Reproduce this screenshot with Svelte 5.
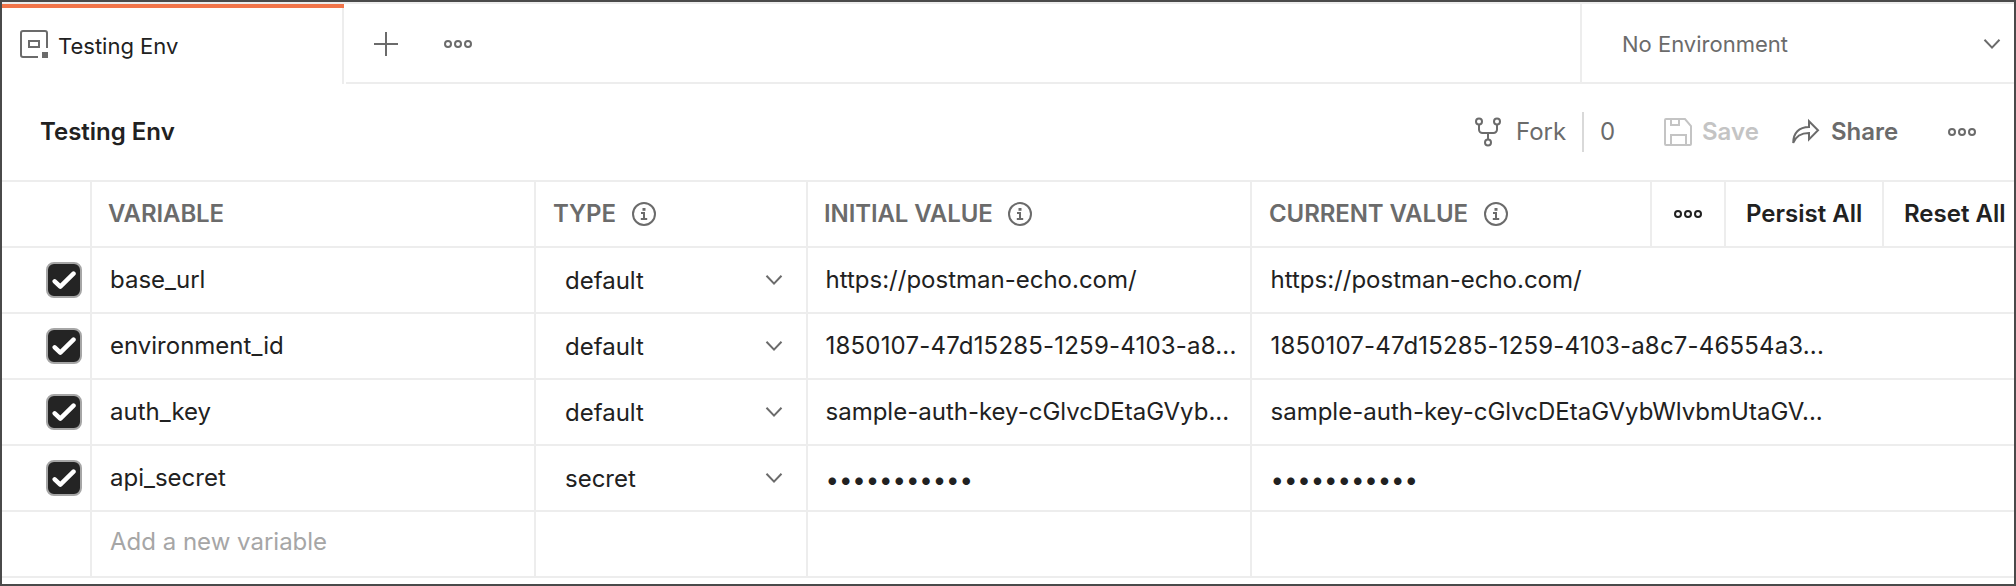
<script>
  const rows = [
    { name: 'base_url', type: 'default', initial: 'https://postman-echo.com/', current: 'https://postman-echo.com/' },
    { name: 'environment_id', type: 'default', initial: '1850107-47d15285-1259-4103-a8...', current: '1850107-47d15285-1259-4103-a8c7-46554a3...', kind: 'digits' },
    { name: 'auth_key', type: 'default', initial: 'sample-auth-key-cGlvcDEtaGVyb...', current: 'sample-auth-key-cGlvcDEtaGVybWlvbmUtaGV...' },
    { name: 'api_secret', type: 'secret', initial: '•••••••••••', current: '•••••••••••', kind: 'secret' }
  ];
</script>

{#snippet dots()}
  <svg class="dots" width="28" height="8" viewBox="0 0 28 8">
    <circle cx="4" cy="4" r="3" /><circle cx="14" cy="4" r="3" /><circle cx="24" cy="4" r="3" />
  </svg>
{/snippet}

{#snippet chevron()}
  <svg class="chevron" width="18" height="12" viewBox="0 0 18 12"><path d="M1.500 1.800 9 9.600l7.500-7.800" /></svg>
{/snippet}

{#snippet info()}
  <svg class="info" width="24" height="24" viewBox="0 0 24 24">
    <circle cx="12" cy="12" r="11" />
    <path d="M9 11h3v6.500M8.800 17h6.400" />
    <rect x="10.500" y="6" width="3" height="2.800" />
  </svg>
{/snippet}

<div class="window">
  <header class="tabs">
    <div class="tab">
      <svg width="28" height="28" viewBox="0 0 28 28">
        <path d="M18 27H3a2 2 0 0 1-2-2V3a2 2 0 0 1 2-2h22a2 2 0 0 1 2 2v15M9 11h10v6H9z" />
        <rect x="22" y="22" width="6" height="6" />
      </svg>
      <span class="tab-name">Testing Env</span>
    </div>
    <div class="tab-tools">
      <svg width="24" height="24" viewBox="0 0 24 24"><path d="M12 0v24M0 12h24" /></svg>
      {@render dots()}
    </div>
    <div class="env-select">
      <span>No Environment</span>
      {@render chevron()}
    </div>
  </header>

  <section class="titlebar">
    <h1>Testing Env</h1>
    <div class="actions">
      <svg class="fork-icon" width="26" height="30" viewBox="0 0 26 30">
        <circle cx="4" cy="4.500" r="3" /><circle cx="22" cy="4.500" r="3" /><circle cx="13" cy="25.500" r="3" />
        <path d="M4 8v4.500a3.500 3.500 0 0 0 3.500 3.500h11a3.500 3.500 0 0 0 3.500-3.500V8M13 16v6" />
      </svg>
      <span class="fork">Fork</span>
      <span class="count">0</span>
      <svg class="save-icon" width="28" height="28" viewBox="0 0 28 28">
        <path d="M1 2a1 1 0 0 1 1-1h19l6 7v18a1 1 0 0 1-1 1H2a1 1 0 0 1-1-1zM7 1v6h8V1M7 27V17h15v10" />
      </svg>
      <span class="save">Save</span>
      <svg class="share-icon" width="28" height="28" viewBox="0 0 28 28">
        <path d="M17 3.200 26 12.300 17 21.400V15C9 15 4 17.500 1.200 25 1.200 15 7 9 17 9z" />
      </svg>
      <span class="share">Share</span>
      {@render dots()}
    </div>
  </section>

  <div class="table">
    <div class="row head">
      <div class="cell"></div>
      <div class="cell">VARIABLE</div>
      <div class="cell"><span class="h-type">TYPE</span>{@render info()}</div>
      <div class="cell"><span class="h-initial">INITIAL VALUE</span>{@render info()}</div>
      <div class="cell"><span class="h-current">CURRENT VALUE</span>{@render info()}</div>
      <div class="cell more">{@render dots()}</div>
      <div class="cell action">Persist All</div>
      <div class="cell action">Reset All</div>
    </div>
    {#each rows as row}
      <div class="row">
        <div class="cell check">
          <span class="box">
            <svg width="24" height="20" viewBox="0 0 24 20"><path d="M2.700 11.300 8.300 16.700 21.500 3.700" /></svg>
          </span>
        </div>
        <div class="cell">{row.name}</div>
        <div class="cell type"><span>{row.type}</span>{@render chevron()}</div>
        <div class="cell initial {row.kind ?? ''}">{row.initial}</div>
        <div class="cell current {row.kind ?? ''}">{row.current}</div>
      </div>
    {/each}
    <div class="row new">
      <div class="cell"></div>
      <div class="cell">Add a new variable</div>
      <div class="cell"></div>
      <div class="cell"></div>
      <div class="cell"></div>
    </div>
  </div>
</div>

<style>
  :global(body) { background: #fff; }
  .window {
    box-sizing: border-box;
    width: 2016px;
    height: 586px;
    overflow: hidden;
    border: 2px solid #4a4a4a;
    background: #fff;
    color: #212121;
    font: 400 24px/30px Inter, sans-serif;
    white-space: nowrap;
  }
  svg { flex: none; fill: none; stroke: #6b6b6b; stroke-width: 2; }
  svg rect { fill: #6b6b6b; stroke: none; }

  .tabs {
    display: flex;
    height: 82px;
    box-sizing: border-box;
    border-top: 2px solid #ededed;
    font-size: 22px;
  }
  .tab {
    display: flex;
    align-items: center;
    box-sizing: border-box;
    width: 342px;
    padding: 4px 0 4px 18px;
    gap: 10px;
    box-shadow: inset 0 4px 0 #f2754a, inset -2px 0 0 #ededed;
  }
  .tab-name { padding-top: 4px; }
  .tab-tools {
    display: flex;
    flex: 1;
    align-items: center;
    box-sizing: border-box;
    gap: 46px;
    margin-left: 2px;
    padding-left: 28px;
    border-bottom: 2px solid #ededed;
  }
  .tab-tools :global(svg) { margin-top: 2px; }
  .env-select {
    display: flex;
    align-items: center;
    justify-content: space-between;
    box-sizing: border-box;
    width: 434px;
    padding: 2px 13px 0 40px;
    border-left: 2px solid #ededed;
    border-bottom: 2px solid #ededed;
    color: #6b6b6b;
  }

  .titlebar {
    display: flex;
    align-items: center;
    justify-content: space-between;
    height: 96px;
    padding: 0 38px;
  }
  h1 { margin: 0; font-size: 24px; font-weight: 600; line-height: 30px; }
  .actions { display: flex; align-items: center; color: #6b6b6b; }
  .fork { width: 66px; margin-left: 15px; }
  .count {
    width: 64px;
    padding-left: 16px;
    border-left: 2px solid #d9d9d9;
    line-height: 40px;
  }
  .save-icon { stroke: #c4c4c4; }
  .save { width: 90px; margin-left: 10px; color: #c4c4c4; font-weight: 600; }
  .share { width: 117px; margin-left: 11px; font-weight: 600; }

  .row {
    display: grid;
    grid-template-columns: 88px 444px 272px 444px 1fr;
    height: 64px;
    border-top: 2px solid #ededed;
  }
  .row.head { grid-template-columns: 88px 444px 272px 444px 400px 74px 158px 1fr; }
  .row.new { border-bottom: 2px solid #ededed; }
  .cell {
    display: flex;
    align-items: center;
    min-width: 0;
    padding-left: 18px;
    border-left: 2px solid #ededed;
  }
  .cell.initial { padding-left: 17.500px; }
  .cell.current { padding-left: 18.500px; }
  .cell:first-child { border-left: none; padding-left: 0; }
  .head .cell { padding-left: 16px; color: #6b6b6b; font-weight: 600; letter-spacing: -0.1px; }
  .head .cell:first-child { padding-left: 0; }
  .h-type { width: 79px; margin-left: 1px; }
  .h-initial { width: 184px; }
  .h-current { width: 215px; margin-left: 1px; }
  .head .more { padding-left: 22px; }
  .more :global(svg) { stroke: #212121; }
  .head .action { padding-left: 20px; color: #212121; letter-spacing: 0; }
  .type { justify-content: space-between; padding: 2px 23px 0 29px; }
  .type :global(.chevron) { margin-top: -2px; }
  .digits { letter-spacing: 0.170px; }
  .initial.digits { letter-spacing: 0.200px; }
  .secret { padding-top: 3px; letter-spacing: -0.100px; }
  .check { justify-content: flex-end; padding-right: 8px; }
  .box {
    display: flex;
    align-items: center;
    justify-content: center;
    box-sizing: border-box;
    width: 36px;
    height: 36px;
    border: 2px solid #a6a6a6;
    border-radius: 8px;
    background: #242424;
  }
  .box svg { stroke: #fff; stroke-width: 4.500; stroke-linecap: round; stroke-linejoin: round; }
  .row.new .cell { padding-bottom: 4px; color: #a6a6a6; }
</style>
